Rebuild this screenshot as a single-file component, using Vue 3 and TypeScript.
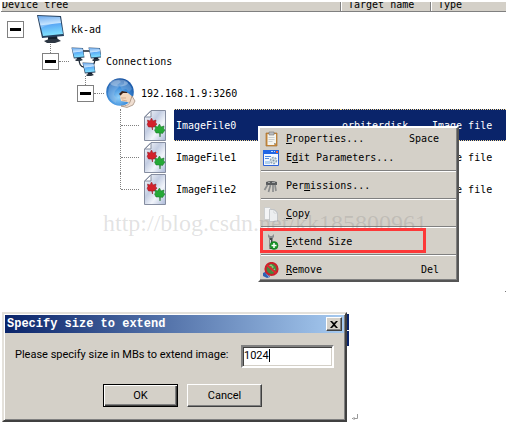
<script setup lang="ts">
import { ref } from 'vue'

type IconName = 'computer' | 'network' | 'globe' | 'image'

interface TreeRow {
  label: string
  level: number
  icon: IconName
  target?: string
  type?: string
  last?: boolean
}

interface MenuItem {
  id: string
  before: string
  key: string
  after: string
  shortcut?: string
  separated?: boolean
}

const rows: TreeRow[] = [
  { label: 'kk-ad', level: 0, icon: 'computer' },
  { label: 'Connections', level: 1, icon: 'network' },
  { label: '192.168.1.9:3260', level: 2, icon: 'globe' },
  { label: 'ImageFile0', level: 3, icon: 'image', target: 'orbiterdisk', type: 'Image file' },
  { label: 'ImageFile1', level: 3, icon: 'image', type: 'Image file' },
  { label: 'ImageFile2', level: 3, icon: 'image', type: 'Image file', last: true },
]

const menu: MenuItem[] = [
  { id: 'properties', before: '', key: 'P', after: 'roperties...', shortcut: 'Space' },
  { id: 'edit', before: 'E', key: 'd', after: 'it Parameters...' },
  { id: 'permissions', before: 'Per', key: 'm', after: 'issions...', separated: true },
  { id: 'copy', before: '', key: 'C', after: 'opy', separated: true },
  { id: 'extend', before: '', key: 'E', after: 'xtend Size', separated: true },
  { id: 'remove', before: '', key: 'R', after: 'emove', shortcut: 'Del', separated: true },
]

const selected = ref('ImageFile0')
const size = ref('1024')
</script>

<template>
  <main class="page">
    <svg class="defs" aria-hidden="true">
      <defs>
        <linearGradient id="screen" x1="0" y1="0" x2="0.15" y2="1">
          <stop offset="0" stop-color="#3b8ee8" />
          <stop offset="0.45" stop-color="#b4dcff" />
          <stop offset="0.5" stop-color="#5ba9f5" />
          <stop offset="1" stop-color="#7fe0ff" />
        </linearGradient>
        <radialGradient id="ocean" cx="0.45" cy="0.7" r="0.7">
          <stop offset="0" stop-color="#8fd0fa" />
          <stop offset="0.5" stop-color="#3f8fdc" />
          <stop offset="1" stop-color="#1450a0" />
        </radialGradient>
        <linearGradient id="paper" x1="0" y1="0" x2="1" y2="1">
          <stop offset="0" stop-color="#ffffff" />
          <stop offset="0.4" stop-color="#c3cde2" />
          <stop offset="0.65" stop-color="#f2f5fb" />
          <stop offset="1" stop-color="#aab8d8" />
        </linearGradient>
        <g id="monitor">
          <path d="M12 22h9l1 5H12z" fill="#16202c" />
          <path d="M8 27l5-2h9l3 2-6 2h-8z" fill="#2c3642" />
          <path d="M1 1l24 1 3 20-22 2z" fill="#27415f" />
          <path d="M2 2l22 1 3 17-20 2z" fill="url(#screen)" />
          <path d="M2 2l22 1 1 6Q14 9 5 14z" fill="#fff" opacity="0.25" />
        </g>
      </defs>
    </svg>

    <section class="pane">
      <table class="tree">
        <colgroup>
          <col class="col-tree" />
          <col class="col-target" />
          <col />
        </colgroup>
        <thead>
          <tr>
            <th><span>Device tree</span></th>
            <th><span>Target name</span></th>
            <th><span>Type</span></th>
          </tr>
        </thead>
        <tbody>
          <tr v-for="row in rows" :key="row.label" :class="{ selected: row.label === selected }" @click="selected = row.label">
            <td>
              <div class="node" :class="'level-' + row.level">
                <button v-if="row.level < 3" class="toggle" type="button" :aria-label="'Collapse ' + row.label"></button>
                <span v-else class="trunk" :class="{ last: row.last }"></span>
                <span class="link"></span>
                <svg v-if="row.icon === 'computer'" class="icon" viewBox="0 0 30 30"><use href="#monitor" /></svg>
                <svg v-else-if="row.icon === 'network'" class="icon" viewBox="0 0 30 30">
                  <path d="M12 5h8M8 12q0 9 5 9M24 12q0 7-4 8" fill="none" stroke="#1c2733" stroke-width="1.3" />
                  <use href="#monitor" transform="translate(0 1) scale(.48)" />
                  <use href="#monitor" transform="translate(17 1) scale(.48)" />
                  <use href="#monitor" transform="translate(11 16) scale(.48)" />
                </svg>
                <svg v-else-if="row.icon === 'globe'" class="icon" viewBox="0 0 30 30">
                  <circle cx="14" cy="14" r="13.8" fill="url(#ocean)" />
                  <path d="M3 8Q7 2 13 2l2 2-4 3 2 2-4 4-1 4 3 3-1 5q-7-3-8-9z" fill="#a9c5e6" opacity=".35" />
                  <path d="M18 3q6 2 8 8l-3 3-3-3-4 1-2-4 4-2z" fill="#7aa9dc" opacity=".5" />
                  <ellipse cx="13" cy="5" rx="9" ry="3.5" fill="#fff" opacity=".3" />
                  <path d="M13 16l3-3 5 1 1 4-5 2z" fill="#3a231b" />
                  <path d="M14 18l3-3h5l5 4-1 7-5-2-6-1z" fill="#f3d8be" />
                  <path d="M15 20h5M16 22l5 1" stroke="#c79c7c" stroke-width=".7" fill="none" />
                  <path d="M26 18l3 5-2 4-6 2.500-6-1.500q8 0 9-4z" fill="#f0dfd2" stroke="#8c7463" stroke-width=".6" />
                </svg>
                <svg v-else class="icon file" viewBox="0 0 22 31">
                  <path d="M7 .5h14.500v30H.5V7z" fill="url(#paper)" stroke="#858da0" />
                  <path d="M7 1v6H1z" fill="#fff" stroke="#858da0" />
                  <path d="M7.500 8l1.500 3 3-1-.5 3 1.500 1-2.500 3-2 0v3l-.8-3-3.200 0-1.500-3 1-1-.5-3 2.500 1z" fill="#d3202b" stroke="#8f151e" stroke-width=".5" />
                  <path d="M15.500 14l1.500 3 3-1-.5 3 1.500 1-2.500 3.500-2-.5-.5 4-.5-4-3.500 0-1.500-3 1-1-.5-3 2.500 1z" fill="#25a936" stroke="#126d20" stroke-width=".5" />
                </svg>
                <span class="label">{{ row.label }}</span>
              </div>
            </td>
            <td><div class="cell">{{ row.target }}</div></td>
            <td><div class="cell">{{ row.type }}</div></td>
          </tr>
        </tbody>
      </table>

      <div class="menu" role="menu">
        <template v-for="item in menu" :key="item.id">
          <hr v-if="item.separated" />
          <button type="button" role="menuitem" class="item" :class="{ marked: item.id === 'extend' }">
            <svg viewBox="0 0 16 16">
              <g v-if="item.id === 'properties'">
                <path d="M3 2h11v13H3z" fill="#c98b3c" stroke="#a87435" stroke-width=".7" />
                <path d="M4.500 3h8.500v9l-2 2H4.500z" fill="#f4f4ef" />
                <path d="M6 1h5v3H6z" fill="#b9bcc0" stroke="#777" stroke-width=".6" />
                <path d="M5.500 6.500h6M5.500 8.500h6M5.500 10.500h4" stroke="#c9cdcd" />
                <path d="M13 12h-2v2z" fill="#9a9a92" />
              </g>
              <g v-else-if="item.id === 'edit'">
                <path d="M.5.500h15v15H.5z" fill="#f3f8ff" stroke="#2c62d8" />
                <path d="M0 0h16v4H0z" fill="#2166e4" />
                <path d="M8 1.500h2M11 1.500h1" stroke="#b9d9ff" />
                <path d="M13 1h2v2h-2z" fill="#f0653a" />
                <path d="M2 6.500h6M2 8.500h4" stroke="#4f8be0" />
                <path d="M2 11h5v3H2z" fill="#b3d1ef" />
                <circle cx="10.500" cy="10.500" r="3" fill="#dce5ea" stroke="#93a8b5" stroke-width="1.500" stroke-dasharray="2 1" />
                <circle cx="10.500" cy="10.500" r="1" fill="#7d98aa" />
              </g>
              <g v-else-if="item.id === 'permissions'">
                <path d="M3 4q5-2 11 0v3L3 7z" fill="#5a5c5e" />
                <path d="M4.500 7l-3 5M7.500 7l-2 7M10 7v7M12 7l1 6" stroke="#8b8d8e" stroke-width="1.700" />
                <path d="M5 4.500h2M9 4.500h3" stroke="#a4a7a8" />
              </g>
              <g v-else-if="item.id === 'copy'">
                <path d="M1.500 1.500h5l3 3v9h-8z" fill="#f4f5f6" stroke="#c3c6c8" stroke-width=".7" />
                <path d="M6.500 3.500h5l3 3v9h-8z" fill="#eceef0" stroke="#b5b9bc" stroke-width=".7" />
                <path d="M11 4v3h3z" fill="#fff" stroke="#b5b9bc" stroke-width=".5" />
              </g>
              <g v-else-if="item.id === 'extend'">
                <path d="M5 0v3l2 2h2l2-2V0L9 2H7z" fill="#898d90" />
                <path d="M8 4v11" stroke="#44484b" stroke-width="3" />
                <path d="M7.500 6v8" stroke="#d5d8da" />
                <circle cx="11" cy="11.500" r="4" fill="#169425" stroke="#0d6d18" stroke-width=".5" />
                <path d="M8.500 11.500h5M11 9v5" stroke="#fff" stroke-width="1.500" />
              </g>
              <g v-else>
                <path d="M0 11l4-2 3 6-3 1-4-2z" fill="#2d62b4" />
                <path d="M3 11l3 4" stroke="#81b1e8" />
                <circle cx="8.500" cy="7" r="6" fill="#47863d" stroke="#c9212a" stroke-width="2.200" />
                <path d="M5 5l3-2 2 2-2 2M9 9l3-2" stroke="#8dcc77" fill="none" stroke-width="1.300" />
                <path d="M4 3l9 8" stroke="#dc2831" stroke-width="2.200" />
              </g>
            </svg>
            <span class="text">{{ item.before }}<u>{{ item.key }}</u>{{ item.after }}</span>
            <span class="shortcut">{{ item.shortcut }}</span>
          </button>
        </template>
      </div>
      <p class="watermark">http://blog.csdn.net/kk185800961</p>
      <i class="speck"></i>
    </section>

    <div class="lower">
      <form class="dialog" role="dialog" aria-labelledby="dialog-title" @submit.prevent>
        <header>
          <h1 id="dialog-title">Specify size to extend</h1>
          <button class="close" type="button" aria-label="Close">
            <svg viewBox="0 0 8 7"><path d="M0 0h2l2 2 2-2h2L5 3.500 8 7H6L4 5 2 7H0l3-3.500z" fill="#000" /></svg>
          </button>
        </header>
        <div class="field">
          <label for="size">Please specify size in MBs to extend image:</label>
          <span class="entry"><input id="size" v-model="size" type="text" /><i></i></span>
        </div>
        <footer>
          <button class="default" type="submit">OK</button>
          <button type="button">Cancel</button>
        </footer>
      </form>
      <span class="behind"></span>
      <svg class="mark" viewBox="0 0 6 6"><path d="M5.500 0v4.500H2M2 3v3M0 4.500h1" fill="none" stroke="#999" /></svg>
    </div>
  </main>
</template>

<style>
body {
  background: #fff;
}
</style>

<style scoped>
.page {
  font: 10px/12px "DejaVu Sans Mono", "Liberation Mono", monospace;
  color: #000;
  overflow: hidden;
}
.defs {
  position: absolute;
  width: 0;
  height: 0;
}
.pane {
  position: relative;
  padding: 2px 0 107px 1px;
}
.tree {
  width: 100%;
  table-layout: fixed;
  border-collapse: separate;
  border-spacing: 0;
}
.col-tree {
  width: 340px;
}
.col-target {
  width: 90px;
}
th {
  height: 9px;
  padding: 0 0 0 7px;
  background: #d4d0c8;
  border-bottom: 1px solid #808080;
  border-right: 1px solid #808080;
  box-shadow: inset 1px 0 #fff;
  font-weight: normal;
  text-align: left;
}
th:first-child {
  padding-left: 1px;
}
th:last-child {
  border-right: 0;
}
th span {
  display: flex;
  align-items: flex-end;
  height: 9px;
  overflow: hidden;
  white-space: nowrap;
}
td {
  padding: 0;
  white-space: nowrap;
}
tbody tr:first-child td {
  padding-top: 1px;
}
.node {
  display: flex;
  align-items: center;
  height: 32px;
}
.cell {
  display: flex;
  align-items: center;
  box-sizing: border-box;
  height: 32px;
  padding: 2px 0 0 1px;
}
.level-0 { padding-left: 6px; }
.level-1 { padding-left: 41px; }
.level-2 { padding-left: 76px; }
.level-3 { padding-left: 119px; }
.toggle {
  position: relative;
  flex: none;
  width: 17px;
  height: 17px;
  padding: 0;
  border: 1px solid #808080;
  background: linear-gradient(#000, #000) center / 11px 3px no-repeat #fff;
}
.level-1 .toggle::before,
.level-2 .toggle::before {
  content: "";
  position: absolute;
  left: 7px;
  bottom: 16px;
  height: 9px;
  border-left: 1px dotted #808080;
}
.link {
  flex: none;
  width: 12px;
}
.level-1 .link,
.level-2 .link,
.level-3 .link {
  width: 10px;
  margin-right: 2px;
  border-top: 1px dotted #808080;
}
.level-3 .link {
  width: 18px;
  margin-right: 5px;
}
.trunk {
  align-self: stretch;
  border-left: 1px dotted #808080;
}
.trunk.last {
  align-self: flex-start;
  height: 16px;
}
.icon {
  flex: none;
  width: 30px;
  height: 30px;
}
.icon.file {
  width: 22px;
  height: 31px;
}
.label {
  display: flex;
  align-items: center;
  flex: 1;
  padding: 2px 0 0 5px;
}
.level-3 .label {
  align-self: stretch;
  margin-left: 8px;
  padding-left: 2px;
}
.selected .label,
.selected .cell {
  color: #fff;
  background:
    linear-gradient(90deg, #f5db95 50%, #0a246a 50%) left top / 2px 1px repeat-x,
    linear-gradient(90deg, #f5db95 50%, #0a246a 50%) left bottom / 2px 1px repeat-x,
    #0a246a;
}
.menu {
  position: absolute;
  left: 258px;
  top: 126px;
  box-sizing: border-box;
  width: 201px;
  padding: 1px;
  background: #d4d0c8;
  border: 2px solid;
  border-color: #fff #555 #555 #fff;
  box-shadow: inset -1px -1px #808080;
}
.item {
  position: relative;
  display: flex;
  align-items: center;
  gap: 7px;
  width: 100%;
  height: 19px;
  padding: 0 17px 0 2px;
  border: 0;
  background: none;
  color: inherit;
  font: inherit;
  text-align: left;
}
.item svg {
  flex: none;
  width: 16px;
  height: 16px;
}
.text {
  flex: 1;
}
.menu hr {
  height: 1px;
  margin: 3px 0 4px;
  border: 0;
  border-top: 1px solid #808080;
  background: #fff;
}
.marked::after {
  content: "";
  position: absolute;
  z-index: 2;
  left: -1px;
  top: -4px;
  width: 160px;
  height: 19px;
  border: 3px solid #fd3838;
}
.watermark {
  position: absolute;
  left: 103px;
  top: 210px;
  margin: 0;
  font: 24px/26px "Liberation Serif", serif;
  color: rgba(110, 110, 110, 0.2);
  pointer-events: none;
}
.speck {
  position: absolute;
  right: 0;
  top: 291px;
  width: 1px;
  height: 1px;
  background: #777;
}
.lower {
  display: flex;
  align-items: flex-start;
  padding: 0 0 2px 2px;
}
.dialog {
  box-sizing: border-box;
  flex: 0 1 345px;
  padding: 1px;
  background: #d4d0c8;
  border: 2px solid;
  border-color: #e4e1db #404040 #404040 #e4e1db;
  box-shadow: inset 1px 1px #fff, inset -1px -1px #808080;
  font: 11px/14px Roboto, "Noto Sans", sans-serif;
}
header {
  display: flex;
  align-items: center;
  justify-content: space-between;
  height: 18px;
  padding: 0 2px;
  background: linear-gradient(90deg, #0a246a, #a6caf0);
}
h1 {
  margin: 0;
  color: #fff;
  font: bold 12px/14px "Liberation Mono", monospace;
}
.dialog button {
  box-sizing: border-box;
  flex: none;
  width: 75px;
  height: 23px;
  padding: 0;
  border: 1px solid;
  border-color: #fff #404040 #404040 #fff;
  box-shadow: inset -1px -1px #808080;
  background: #d4d0c8;
  color: #000;
  font: inherit;
}
.dialog .close {
  display: flex;
  align-items: center;
  justify-content: center;
  width: 16px;
  height: 14px;
}
.close svg {
  width: 8px;
  height: 7px;
}
.field {
  display: flex;
  align-items: center;
  justify-content: space-between;
  padding: 12px 10px 0;
}
.field label {
  padding-bottom: 4px;
}
.entry {
  position: relative;
  display: flex;
}
.entry input {
  box-sizing: border-box;
  width: 93px;
  height: 23px;
  padding: 0 2px 2px 1px;
  border: 2px solid;
  border-color: #808080 #fff #fff #808080;
  box-shadow: inset 1px 1px #404040, inset -1px -1px #d4d0c8;
  background: #fff;
  color: #000;
  font: inherit;
  outline: 0;
}
.entry i {
  position: absolute;
  left: 28px;
  top: 4px;
  width: 1px;
  height: 13px;
  background: #000;
}
footer {
  display: flex;
  gap: 9px;
  padding: 16px 0 12px 98px;
}
.dialog .default {
  border-color: #000;
  box-shadow: inset 1px 1px #fff, inset -1px -1px #404040, inset -2px -2px #808080;
}
.behind {
  width: 2px;
  height: 32px;
  margin-top: 2px;
  background: linear-gradient(#fff, #fff) 0 16px / 2px 1px no-repeat #0a246a;
}
.mark {
  align-self: flex-end;
  width: 6px;
  height: 6px;
  margin: 0 0 2px 3px;
}
</style>
